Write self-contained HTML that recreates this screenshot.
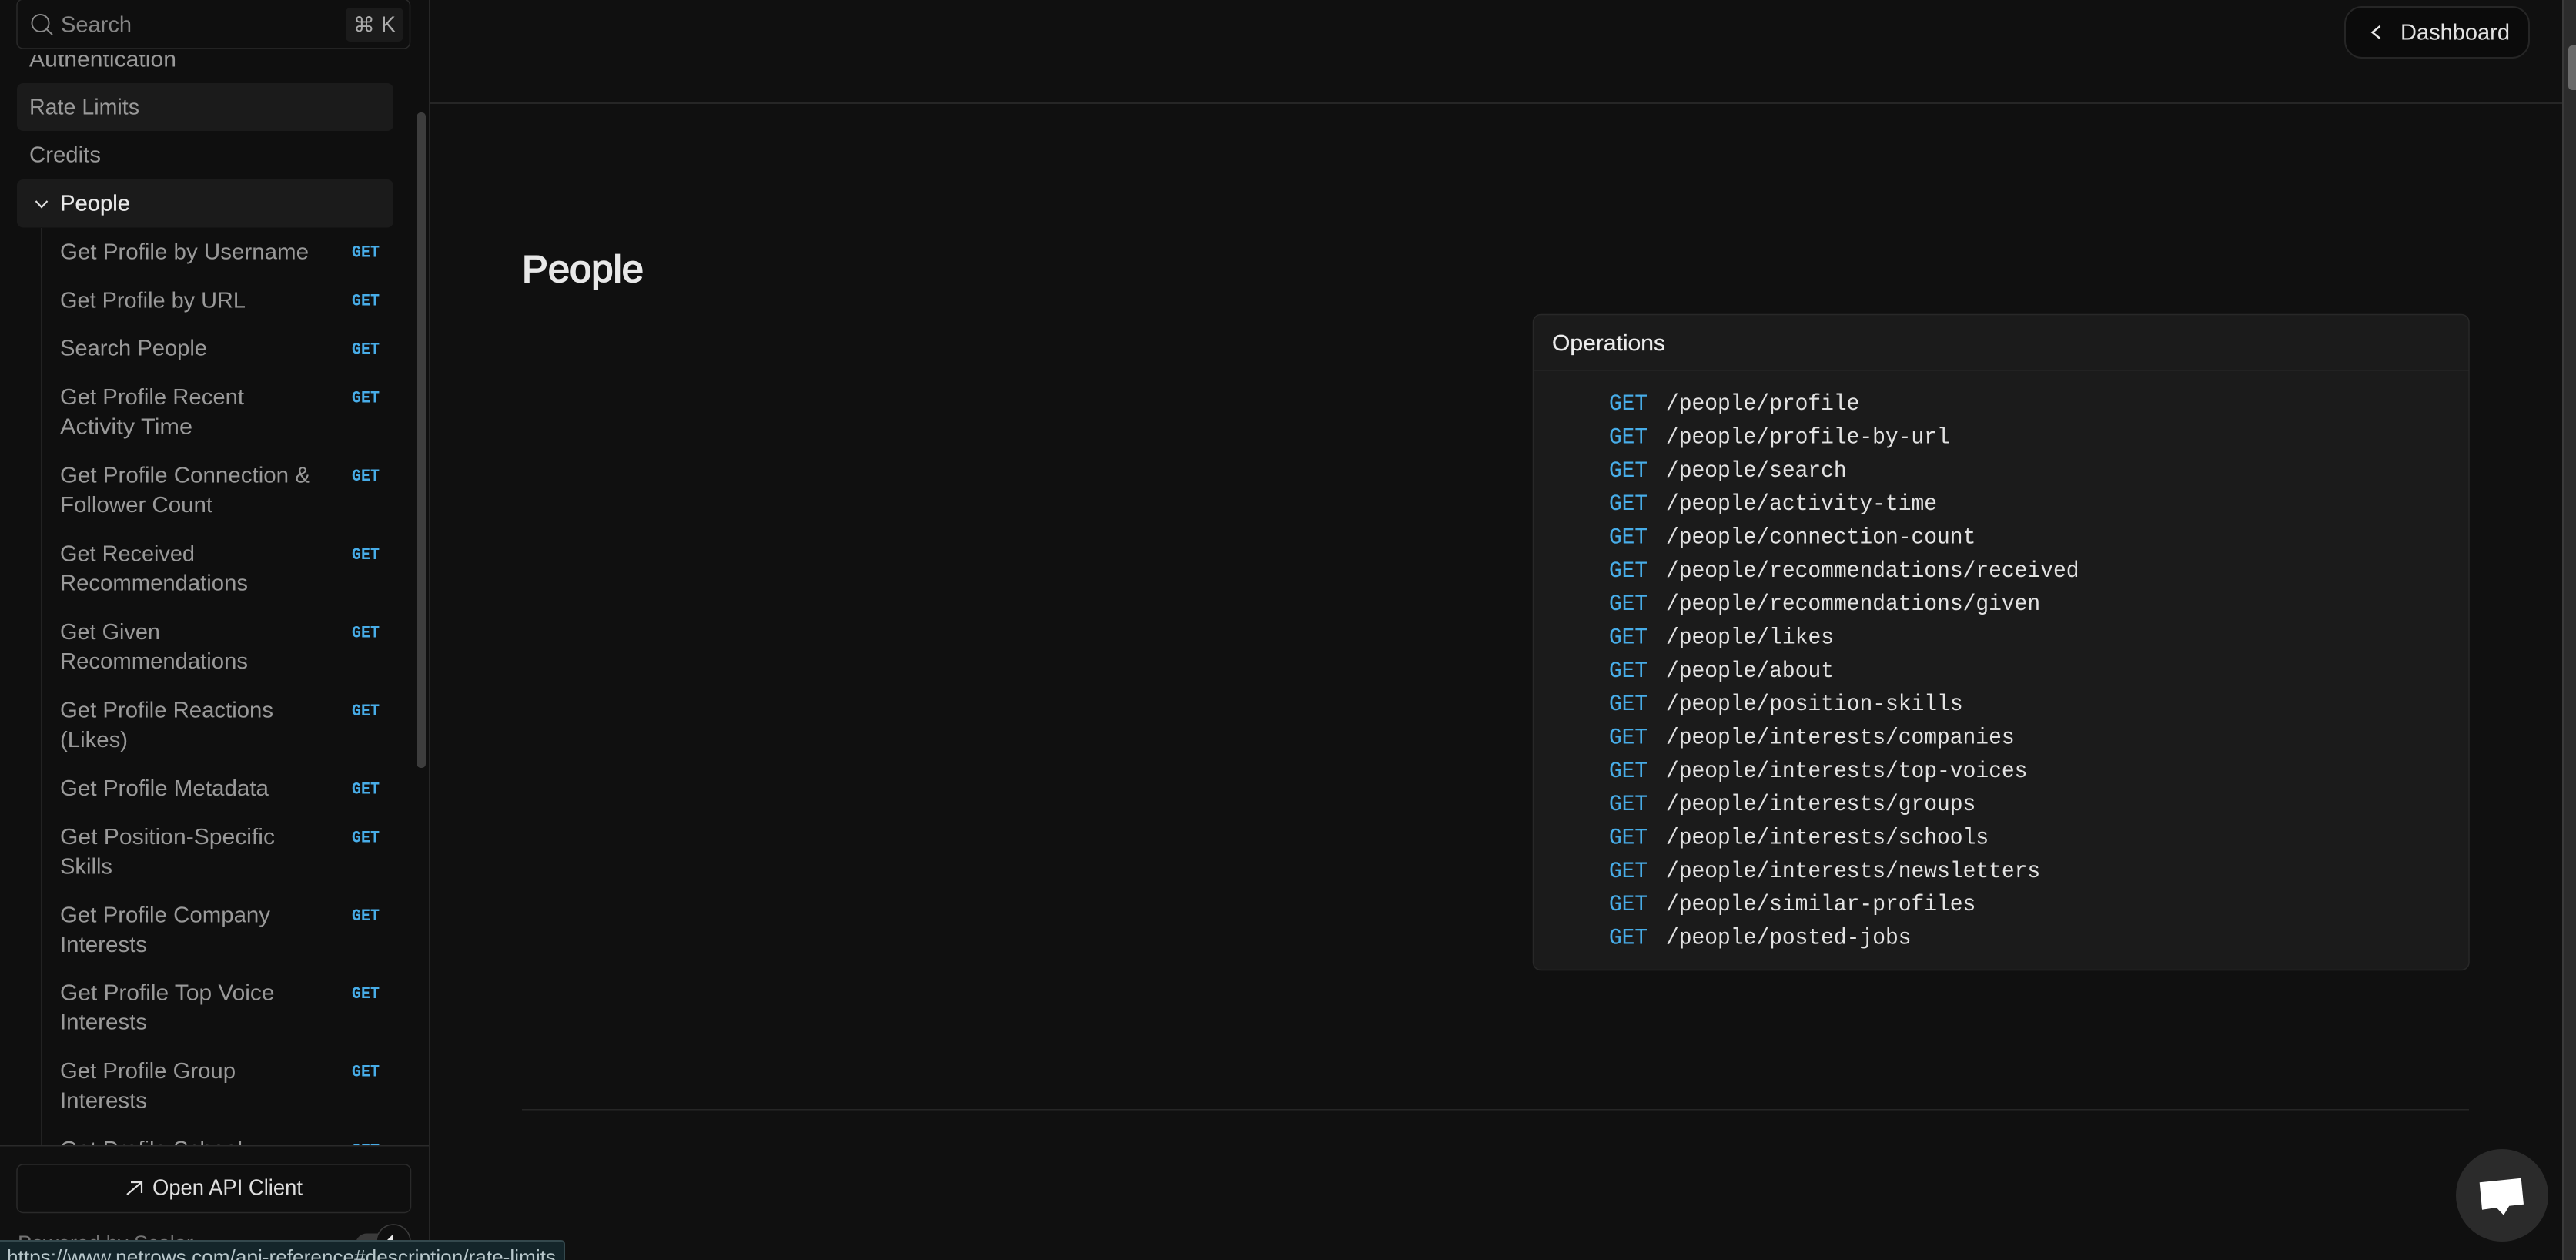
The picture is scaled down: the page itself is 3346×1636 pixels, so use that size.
<!DOCTYPE html>
<html lang="en"><head><meta charset="utf-8"><title>People</title>
<style>
html,body{margin:0;padding:0;background:#101010;width:3346px;height:1636px;overflow:hidden}
svg{display:block}
text{font-family:"Liberation Sans","DejaVu Sans",sans-serif;white-space:pre}
.n{font-size:29px;fill:#999}
.g{font-family:"Liberation Mono",monospace;font-weight:700;font-size:22px;fill:#48ade8;transform:translateY(-.7px)}
.m{font-family:"Liberation Mono",monospace;font-size:29.500px;transform:translateY(-1.2px)}
.mg{fill:#48ade8}
.mp{fill:#e2e2e2}
</style></head><body>
<svg xmlns="http://www.w3.org/2000/svg" width="3346" height="1636" viewBox="0 0 3346 1636">
<defs><clipPath id="list"><rect x="0" y="72" width="557" height="1415"/></clipPath></defs>
<rect width="3346" height="1636" fill="#101010"/>
<rect width="557" height="1636" fill="#0f0f0f"/>

<!-- main header -->
<rect x="558" y="133" width="2771" height="2" fill="#262626"/>
<rect x="3046" y="9" width="239" height="66" rx="22" fill="#0b0b0b" stroke="#262626" stroke-width="2"/>
<path d="M3091.500 34L3081.500 42L3091.500 50" fill="none" stroke="#e8e8e8" stroke-width="2.500"/>
<text x="3118" y="51.700" font-size="29" fill="#e2e2e2" textLength="142" lengthAdjust="spacingAndGlyphs">Dashboard</text>

<!-- heading -->
<text x="678" y="366" font-size="49.500" fill="#e8e8e8" stroke="#e8e8e8" stroke-width="1.700" textLength="158" lengthAdjust="spacingAndGlyphs">People</text>

<!-- card -->
<rect x="1991.500" y="408.500" width="1215.500" height="851" rx="10" fill="#1b1b1b" stroke="#282828" stroke-width="1.500"/>
<rect x="1992" y="480" width="1215" height="1.500" fill="#2a2a2a"/>
<text x="2016" y="455" font-size="29" fill="#ececec" stroke="#ececec" stroke-width="0.250" textLength="147" lengthAdjust="spacingAndGlyphs">Operations</text>

<text class="m mg" x="2090" y="533.300" textLength="50" lengthAdjust="spacingAndGlyphs">GET</text><text class="m mp" x="2164" y="533.300" textLength="251.400" lengthAdjust="spacingAndGlyphs">/people/profile</text>
<text class="m mg" x="2090" y="576.600" textLength="50" lengthAdjust="spacingAndGlyphs">GET</text><text class="m mp" x="2164" y="576.600" textLength="368.700" lengthAdjust="spacingAndGlyphs">/people/profile-by-url</text>
<text class="m mg" x="2090" y="620" textLength="50" lengthAdjust="spacingAndGlyphs">GET</text><text class="m mp" x="2164" y="620" textLength="234.700" lengthAdjust="spacingAndGlyphs">/people/search</text>
<text class="m mg" x="2090" y="663.300" textLength="50" lengthAdjust="spacingAndGlyphs">GET</text><text class="m mp" x="2164" y="663.300" textLength="352" lengthAdjust="spacingAndGlyphs">/people/activity-time</text>
<text class="m mg" x="2090" y="706.600" textLength="50" lengthAdjust="spacingAndGlyphs">GET</text><text class="m mp" x="2164" y="706.600" textLength="402.300" lengthAdjust="spacingAndGlyphs">/people/connection-count</text>
<text class="m mg" x="2090" y="750" textLength="50" lengthAdjust="spacingAndGlyphs">GET</text><text class="m mp" x="2164" y="750" textLength="536.500" lengthAdjust="spacingAndGlyphs">/people/recommendations/received</text>
<text class="m mg" x="2090" y="793.300" textLength="50" lengthAdjust="spacingAndGlyphs">GET</text><text class="m mp" x="2164" y="793.300" textLength="486.200" lengthAdjust="spacingAndGlyphs">/people/recommendations/given</text>
<text class="m mg" x="2090" y="836.600" textLength="50" lengthAdjust="spacingAndGlyphs">GET</text><text class="m mp" x="2164" y="836.600" textLength="218" lengthAdjust="spacingAndGlyphs">/people/likes</text>
<text class="m mg" x="2090" y="880" textLength="50" lengthAdjust="spacingAndGlyphs">GET</text><text class="m mp" x="2164" y="880" textLength="218" lengthAdjust="spacingAndGlyphs">/people/about</text>
<text class="m mg" x="2090" y="923.300" textLength="50" lengthAdjust="spacingAndGlyphs">GET</text><text class="m mp" x="2164" y="923.300" textLength="385.600" lengthAdjust="spacingAndGlyphs">/people/position-skills</text>
<text class="m mg" x="2090" y="966.600" textLength="50" lengthAdjust="spacingAndGlyphs">GET</text><text class="m mp" x="2164" y="966.600" textLength="452.600" lengthAdjust="spacingAndGlyphs">/people/interests/companies</text>
<text class="m mg" x="2090" y="1010" textLength="50" lengthAdjust="spacingAndGlyphs">GET</text><text class="m mp" x="2164" y="1010" textLength="469.400" lengthAdjust="spacingAndGlyphs">/people/interests/top-voices</text>
<text class="m mg" x="2090" y="1053.300" textLength="50" lengthAdjust="spacingAndGlyphs">GET</text><text class="m mp" x="2164" y="1053.300" textLength="402.300" lengthAdjust="spacingAndGlyphs">/people/interests/groups</text>
<text class="m mg" x="2090" y="1096.600" textLength="50" lengthAdjust="spacingAndGlyphs">GET</text><text class="m mp" x="2164" y="1096.600" textLength="419.100" lengthAdjust="spacingAndGlyphs">/people/interests/schools</text>
<text class="m mg" x="2090" y="1140" textLength="50" lengthAdjust="spacingAndGlyphs">GET</text><text class="m mp" x="2164" y="1140" textLength="486.200" lengthAdjust="spacingAndGlyphs">/people/interests/newsletters</text>
<text class="m mg" x="2090" y="1183.300" textLength="50" lengthAdjust="spacingAndGlyphs">GET</text><text class="m mp" x="2164" y="1183.300" textLength="402.300" lengthAdjust="spacingAndGlyphs">/people/similar-profiles</text>
<text class="m mg" x="2090" y="1226.700" textLength="50" lengthAdjust="spacingAndGlyphs">GET</text><text class="m mp" x="2164" y="1226.700" textLength="318.500" lengthAdjust="spacingAndGlyphs">/people/posted-jobs</text>

<rect x="678" y="1440" width="2529" height="1.500" fill="#262626"/>

<!-- page scrollbar -->
<rect x="3329" y="0" width="17" height="1636" fill="#2c2c2c"/>
<rect x="3328" y="0" width="2" height="1636" fill="#3a3a3a"/>
<path d="M3346 59H3341a5 5 0 0 0-5 5V112a5 5 0 0 0 5 5H3346Z" fill="#6b6b6b"/>

<!-- chat -->
<circle cx="3250" cy="1552" r="60" fill="#2b2b2b"/>
<polygon points="3220.700,1535.300 3274.700,1529.700 3278,1563.700 3259.300,1565.700 3252,1577.700 3242.700,1568 3224,1570.700" fill="#fff"/>

<!-- sidebar -->
<rect x="557" y="0" width="1.500" height="1636" fill="#262626"/>
<rect x="541.500" y="146" width="11.500" height="851" rx="5" fill="#3d3d3d"/>
<rect x="22" y="108" width="489" height="62" rx="8" fill="#1b1b1b"/>
<rect x="22" y="233" width="489" height="62.500" rx="8" fill="#1b1b1b"/>
<rect x="53" y="296" width="1.500" height="1191" fill="#222"/>

<g clip-path="url(#list)">
<text class="n" x="38" y="86.700" textLength="191" lengthAdjust="spacingAndGlyphs">Authentication</text>
<text class="n" x="38" y="148.300" textLength="143" lengthAdjust="spacingAndGlyphs">Rate Limits</text>
<text class="n" x="38" y="210.300" textLength="93" lengthAdjust="spacingAndGlyphs">Credits</text>
<text class="n" x="78" y="273.300" style="fill:#e8e8e8" stroke="#e8e8e8" stroke-width="0.300" textLength="91" lengthAdjust="spacingAndGlyphs">People</text>
<path d="M46.500 261L54 269L61.500 261" fill="none" stroke="#e0e0e0" stroke-width="2.200"/>

<text class="n" x="78" y="336.700" textLength="323" lengthAdjust="spacingAndGlyphs">Get Profile by Username</text><text class="g" x="457" y="334" textLength="36" lengthAdjust="spacingAndGlyphs">GET</text>
<text class="n" x="78" y="399.500" textLength="241" lengthAdjust="spacingAndGlyphs">Get Profile by URL</text><text class="g" x="457" y="397" textLength="36" lengthAdjust="spacingAndGlyphs">GET</text>
<text class="n" x="78" y="461.700" textLength="191" lengthAdjust="spacingAndGlyphs">Search People</text><text class="g" x="457" y="460" textLength="36" lengthAdjust="spacingAndGlyphs">GET</text>
<text class="n" x="78" y="525" textLength="239" lengthAdjust="spacingAndGlyphs">Get Profile Recent</text><text class="g" x="457" y="523" textLength="36" lengthAdjust="spacingAndGlyphs">GET</text>
<text class="n" x="78" y="563.300" textLength="172" lengthAdjust="spacingAndGlyphs">Activity Time</text>
<text class="n" x="78" y="626.700" textLength="325" lengthAdjust="spacingAndGlyphs">Get Profile Connection &amp;</text><text class="g" x="457" y="624.500" textLength="36" lengthAdjust="spacingAndGlyphs">GET</text>
<text class="n" x="78" y="665" textLength="198" lengthAdjust="spacingAndGlyphs">Follower Count</text>
<text class="n" x="78" y="728.300" textLength="175" lengthAdjust="spacingAndGlyphs">Get Received</text><text class="g" x="457" y="726.500" textLength="36" lengthAdjust="spacingAndGlyphs">GET</text>
<text class="n" x="78" y="766.700" textLength="244" lengthAdjust="spacingAndGlyphs">Recommendations</text>
<text class="n" x="78" y="830" textLength="130" lengthAdjust="spacingAndGlyphs">Get Given</text><text class="g" x="457" y="828" textLength="36" lengthAdjust="spacingAndGlyphs">GET</text>
<text class="n" x="78" y="868" textLength="244" lengthAdjust="spacingAndGlyphs">Recommendations</text>
<text class="n" x="78" y="931.500" textLength="277" lengthAdjust="spacingAndGlyphs">Get Profile Reactions</text><text class="g" x="457" y="929.500" textLength="36" lengthAdjust="spacingAndGlyphs">GET</text>
<text class="n" x="78" y="970" textLength="88" lengthAdjust="spacingAndGlyphs">(Likes)</text>
<text class="n" x="78" y="1033" textLength="271" lengthAdjust="spacingAndGlyphs">Get Profile Metadata</text><text class="g" x="457" y="1031" textLength="36" lengthAdjust="spacingAndGlyphs">GET</text>
<text class="n" x="78" y="1096" textLength="279" lengthAdjust="spacingAndGlyphs">Get Position-Specific</text><text class="g" x="457" y="1094" textLength="36" lengthAdjust="spacingAndGlyphs">GET</text>
<text class="n" x="78" y="1134.500" textLength="68" lengthAdjust="spacingAndGlyphs">Skills</text>
<text class="n" x="78" y="1197.500" textLength="273" lengthAdjust="spacingAndGlyphs">Get Profile Company</text><text class="g" x="457" y="1195.500" textLength="36" lengthAdjust="spacingAndGlyphs">GET</text>
<text class="n" x="78" y="1236" textLength="113" lengthAdjust="spacingAndGlyphs">Interests</text>
<text class="n" x="78" y="1298.500" textLength="278.500" lengthAdjust="spacingAndGlyphs">Get Profile Top Voice</text><text class="g" x="457" y="1296.500" textLength="36" lengthAdjust="spacingAndGlyphs">GET</text>
<text class="n" x="78" y="1336.700" textLength="113" lengthAdjust="spacingAndGlyphs">Interests</text>
<text class="n" x="78" y="1400" textLength="228" lengthAdjust="spacingAndGlyphs">Get Profile Group</text><text class="g" x="457" y="1398" textLength="36" lengthAdjust="spacingAndGlyphs">GET</text>
<text class="n" x="78" y="1438.500" textLength="113" lengthAdjust="spacingAndGlyphs">Interests</text>
<text class="n" x="78" y="1502" textLength="237" lengthAdjust="spacingAndGlyphs">Get Profile School</text><text class="g" x="457" y="1500" textLength="36" lengthAdjust="spacingAndGlyphs">GET</text>
</g>

<!-- search -->
<rect x="22" y="-1" width="510.500" height="64" rx="8" fill="#0f0f0f" stroke="#2a2a2a" stroke-width="1.500"/>
<circle cx="52.500" cy="30" r="11" fill="none" stroke="#8a8a8a" stroke-width="2"/>
<path d="M60.500 38L68 45" stroke="#8a8a8a" stroke-width="2" fill="none"/>
<text x="79" y="41.700" font-size="29" fill="#858585" textLength="92" lengthAdjust="spacingAndGlyphs">Search</text>
<rect x="449" y="10" width="74.500" height="44" rx="6" fill="#1b1b1b"/>
<text x="459" y="41.500" font-size="27" fill="#ababab" textLength="28" lengthAdjust="spacingAndGlyphs">⌘</text>
<text x="495" y="41.700" font-size="29" fill="#ababab" textLength="19" lengthAdjust="spacingAndGlyphs">K</text>

<!-- sidebar footer -->
<rect x="0" y="1488" width="557" height="148" fill="#101010"/>
<rect x="0" y="1487" width="557" height="1.500" fill="#2a2a2a"/>
<rect x="22" y="1512" width="511.500" height="62.500" rx="8" fill="#0f0f0f" stroke="#2a2a2a" stroke-width="1.500"/>
<path d="M165 1551L184 1535M170 1535H184V1549" fill="none" stroke="#e0e0e0" stroke-width="2.200"/>
<text x="198" y="1551.700" font-size="29" fill="#dedede" textLength="195" lengthAdjust="spacingAndGlyphs">Open API Client</text>
<text x="23" y="1623" font-size="27" fill="#737373" textLength="228" lengthAdjust="spacingAndGlyphs">Powered by Scalar</text>
<rect x="461.500" y="1601.500" width="60" height="30" rx="15" fill="#3a3a3a"/>
<circle cx="511" cy="1612" r="22" fill="#101010" stroke="#3c3c3c" stroke-width="1.500"/>
<path d="M510 1603L502 1611L511 1612Z" fill="#e8e8e8"/>

<!-- status bubble -->
<path d="M-2 1638V1611H729a4 4 0 0 1 4 4V1638Z" fill="#14252a" stroke="#34484d" stroke-width="2"/>
<text x="9" y="1641" font-size="26" fill="#b7c6ca" textLength="713" lengthAdjust="spacingAndGlyphs">https://www.netrows.com/api-reference#description/rate-limits</text>
</svg>
</body></html>
